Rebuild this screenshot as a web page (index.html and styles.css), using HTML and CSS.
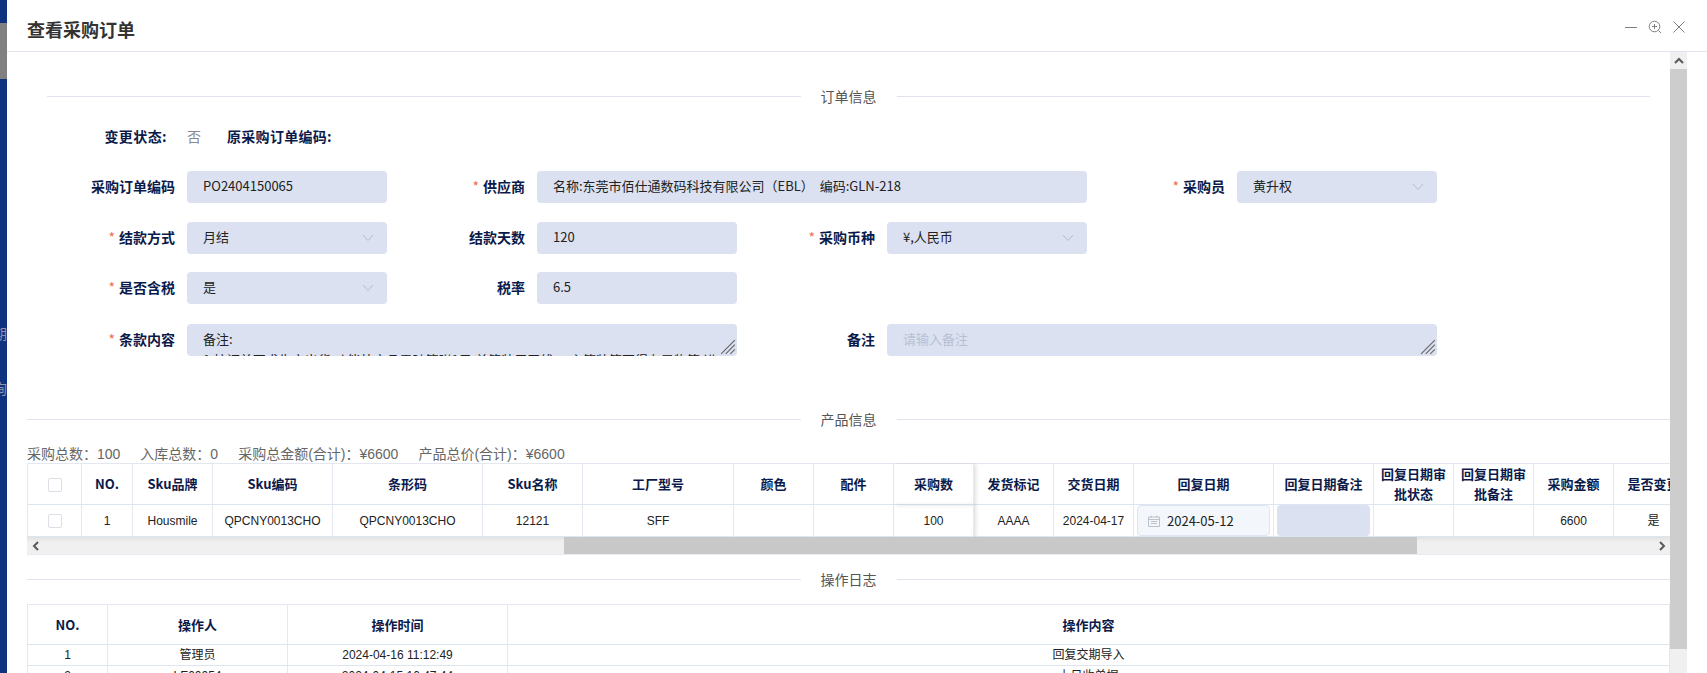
FILE: index.html
```html
<!DOCTYPE html>
<html lang="zh-CN">
<head>
<meta charset="utf-8">
<title>查看采购订单</title>
<link rel="stylesheet" href="styles.css">
</head>
<body>
<div class="page">
  <aside class="rail">
    <div class="rail-active"></div>
    <div class="rail-glyph first">期</div>
    <div class="rail-glyph second">询</div>
  </aside>
  <main class="dialog">
    <header class="dialog-head">
      <h1 class="dialog-title">查看采购订单</h1>
      <div class="win-tools">
        <svg class="win-icon" viewBox="0 0 14 14"><path d="M1 7.5h12"/></svg>
        <svg class="win-icon" viewBox="0 0 14 14"><circle cx="6.5" cy="6.5" r="5.3"/><path d="M6.5 4v5M4 6.5h5M10.5 10.5l2.5 2.5"/></svg>
        <svg class="win-icon" viewBox="0 0 14 14"><path d="M1.5 1.5l11 11M12.5 1.5l-11 11"/></svg>
      </div>
    </header>
    <div class="dialog-body">
      <div class="content">
        <div class="divider inset first"><span class="divider-text">订单信息</span></div>
        <div class="status-row">
          <span class="status-label">变更状态:</span>
          <span class="status-value">否</span>
          <span class="status-origin">原采购订单编码:</span>
        </div>
        <div class="form-grid">
          <div class="label">采购订单编码</div>
          <div class="field">PO2404150065</div>
          <div class="label"><i class="req">*</i>供应商</div>
          <div class="field span3">名称:东莞市佰仕通数码科技有限公司&#xFF08;EBL&#xFF09;&nbsp;&nbsp;编码:GLN-218</div>
          <div class="label"><i class="req">*</i>采购员</div>
          <div class="field select"><span>黄升权</span><svg class="chev" viewBox="0 0 12 8"><path d="M1 1l5 5.5L11 1"/></svg></div>

          <div class="label"><i class="req">*</i>结款方式</div>
          <div class="field select"><span>月结</span><svg class="chev" viewBox="0 0 12 8"><path d="M1 1l5 5.5L11 1"/></svg></div>
          <div class="label">结款天数</div>
          <div class="field">120</div>
          <div class="label"><i class="req">*</i>采购币种</div>
          <div class="field select"><span>¥,人民币</span><svg class="chev" viewBox="0 0 12 8"><path d="M1 1l5 5.5L11 1"/></svg></div>
          <div class="blank"></div>
          <div class="blank"></div>

          <div class="label"><i class="req">*</i>是否含税</div>
          <div class="field select"><span>是</span><svg class="chev" viewBox="0 0 12 8"><path d="M1 1l5 5.5L11 1"/></svg></div>
          <div class="label">税率</div>
          <div class="field">6.5</div>
          <div class="blank"></div>
          <div class="blank"></div>
          <div class="blank"></div>
          <div class="blank"></div>

          <div class="label"><i class="req">*</i>条款内容</div>
          <div class="field span3 area">
            <div class="area-text">备注:<br>1.按订单要求生产出货,功能外产品需随箱附1只,单笔装用天线,一主箱装箱不得有异物等,进</div>
            <svg class="grip" viewBox="0 0 14 14"><path d="M13 1L1 13M13 5L5 13M13 9l-4 4"/></svg>
          </div>
          <div class="label">备注</div>
          <div class="field span3 area">
            <div class="area-text placeholder">请输入备注</div>
            <svg class="grip" viewBox="0 0 14 14"><path d="M13 1L1 13M13 5L5 13M13 9l-4 4"/></svg>
          </div>
        </div>

        <div class="divider second"><span class="divider-text">产品信息</span></div>
        <div class="summary">
          <span>采购总数&#xFF1A;100</span>
          <span>入库总数&#xFF1A;0</span>
          <span>采购总金额(合计)&#xFF1A;¥6600</span>
          <span>产品总价(合计)&#xFF1A;¥6600</span>
        </div>
        <div class="table-clip">
          <table class="grid product">
            <colgroup>
              <col class="w54"><col class="w51"><col class="w80"><col class="w120"><col class="w150"><col class="w100"><col class="w151"><col class="w80"><col class="w80"><col class="w80"><col class="w80"><col class="w80"><col class="w140"><col class="w100"><col class="w80"><col class="w80"><col class="w80"><col class="w80">
            </colgroup>
            <thead>
              <tr>
                <th><span class="check"></span></th>
                <th>NO.</th><th>Sku品牌</th><th>Sku编码</th><th>条形码</th><th>Sku名称</th><th>工厂型号</th><th>颜色</th><th>配件</th><th class="frozen-edge">采购数</th><th>发货标记</th><th>交货日期</th><th>回复日期</th><th>回复日期备注</th><th>回复日期审批状态</th><th>回复日期审批备注</th><th>采购金额</th><th>是否变更</th>
              </tr>
            </thead>
            <tbody>
              <tr>
                <td><span class="check"></span></td>
                <td>1</td><td>Housmile</td><td>QPCNY0013CHO</td><td>QPCNY0013CHO</td><td>12121</td><td>SFF</td><td></td><td></td><td class="frozen-edge">100</td><td>AAAA</td><td>2024-04-17</td>
                <td class="tight"><div class="date-box"><svg class="cal" viewBox="0 0 12 12"><path d="M.5 2h11v9.5H.5zM.5 4.5h11M3 .5v2.5M9 .5v2.5M3 6.5h6M3 8.5h6"/></svg>2024-05-12</div></td>
                <td class="tight"><div class="note-box"></div></td>
                <td></td><td></td><td>6600</td><td>是</td>
              </tr>
            </tbody>
          </table>
        </div>
        <div class="hbar">
          <div class="hbar-btn"><svg class="arrow" viewBox="0 0 8 10"><path d="M6 1L2 5l4 4"/></svg></div>
          <div class="hbar-lead"></div>
          <div class="hbar-thumb"></div>
          <div class="hbar-tail"></div>
          <div class="hbar-btn"><svg class="arrow" viewBox="0 0 8 10"><path d="M2 1l4 4-4 4"/></svg></div>
        </div>

        <div class="divider third"><span class="divider-text">操作日志</span></div>
        <table class="grid log">
          <colgroup><col class="w80"><col class="w180"><col class="w220"><col></colgroup>
          <thead><tr><th>NO.</th><th>操作人</th><th>操作时间</th><th>操作内容</th></tr></thead>
          <tbody>
            <tr><td>1</td><td>管理员</td><td>2024-04-16 11:12:49</td><td>回复交期导入</td></tr>
            <tr><td>2</td><td>LE00054</td><td>2024-04-15 10:47:44</td><td>上日收单据</td></tr>
          </tbody>
        </table>
      </div>
      <div class="vbar">
        <div class="vbar-btn"><svg class="arrow up" viewBox="0 0 10 8"><path d="M1 6l4-4 4 4"/></svg></div>
        <div class="vbar-thumb"></div>
        <div class="vbar-track"></div>
      </div>
    </div>
  </main>
</div>
</body>
</html>
```
FILE: styles.css
```css
* { box-sizing: border-box; }
html, body { margin: 0; padding: 0; height: 100%; background: #fff; }
body { font-family: "Noto Sans CJK SC", "Liberation Sans", sans-serif; overflow: hidden; }
.page { display: flex; width: 1707px; height: 673px; overflow: hidden; }

.rail { width: 7px; flex: none; background: #0f327e; padding-top: 23px; overflow: hidden; }
.rail-active { height: 56px; background: #808080; }
.rail-glyph { font-size: 14px; line-height: 16px; width: 7px; color: #8b95ae; white-space: nowrap; text-indent: -7px; }
.rail-glyph.first { margin-top: 246px; }
.rail-glyph.second { margin-top: 39px; }

.dialog { flex: 1; min-width: 0; display: flex; flex-direction: column; background: #fff; }
.dialog-head { height: 52px; flex: none; display: flex; align-items: center; justify-content: space-between; padding: 0 20px; border-bottom: 1px solid #e1e4ee; }
.dialog-title { margin: 6px 0 0; font-size: 18px; font-weight: 700; color: #333; line-height: 24px; }
.win-tools { display: flex; gap: 10px; margin: 2px 1px 0 0; }
.win-icon { width: 14px; height: 14px; fill: none; stroke: #7f7f7f; stroke-width: 1; }

.dialog-body { flex: 1; min-height: 0; display: flex; padding-right: 20px; }
.content { flex: 1; min-width: 0; overflow: hidden; padding-left: 20px; }

.vbar { width: 17px; flex: none; display: flex; flex-direction: column; }
.vbar-btn { height: 17px; background: #f0f0f0; display: flex; align-items: center; justify-content: center; }
.vbar-thumb { height: 580px; background: #cdcdcd; }
.vbar-track { flex: 1; background: #f0f0f0; }
.arrow { fill: none; stroke: #5a5a5a; stroke-width: 2; }
.arrow.up { width: 10px; height: 8px; }

.divider { display: flex; align-items: center; height: 20px; font-size: 14px; color: #555; }
.divider::before, .divider::after { content: ""; flex: 1; height: 1px; background: #dfe3ec; }
.divider-text { padding: 0 20px; line-height: 20px; }
.divider.inset { margin: 0 20px; }
.divider.first { margin-top: 34px; }
.divider.second { margin-top: 53px; }
.divider.third { margin-top: 14px; }

.status-row { display: flex; align-items: center; height: 20px; margin-top: 20px; font-size: 14px; line-height: 20px; }
.status-label { width: 140px; text-align: right; font-weight: 700; color: #0b1a4a; letter-spacing: 0.4px; }
.status-value { margin-left: 20px; color: #888; }
.status-origin { margin-left: 26px; font-weight: 700; color: #0b1a4a; letter-spacing: 0.3px; }

.form-grid { display: grid; grid-template-columns: 148px 200px 126px 200px 126px 200px 126px 200px; grid-template-rows: 33px 32px 34px 32px; column-gap: 12px; row-gap: 18px; margin-top: 25px; }
.label { height: 32px; line-height: 30px; text-align: right; font-size: 14px; font-weight: 700; color: #0b1a4a; white-space: nowrap; }
.req { font-style: normal; font-weight: 400; color: #f56c4c; margin-right: 4px; }
.field { position: relative; height: 32px; line-height: 30px; padding: 0 16px; background: #dbe1f0; border-radius: 4px; font-size: 13px; color: #222; white-space: nowrap; overflow: hidden; }
.span3 { grid-column: span 3; }
.select { display: flex; justify-content: space-between; align-items: flex-start; padding-right: 13px; }
.chev { width: 12px; height: 8px; align-self: center; fill: none; stroke: #b4bccd; stroke-width: 1; }
.area { padding: 0; }
.area-text { padding: 4px 16px; line-height: 21px; }
.area-text.placeholder { color: #b7bfd2; }
.grip { position: absolute; right: 1px; bottom: 1px; width: 16px; height: 16px; fill: none; stroke: #666; stroke-width: 1; }

.summary { display: flex; gap: 20px; margin-top: 16px; height: 18px; line-height: 18px; font-family: "Liberation Sans", "Noto Sans CJK SC", sans-serif; font-size: 14px; color: #666; }

.table-clip { width: 1643px; overflow: hidden; }
.grid { border-collapse: separate; border-spacing: 0; table-layout: fixed; border-top: 1px solid #e3e7ef; border-left: 1px solid #e3e7ef; }
.grid th, .grid td { padding: 0; text-align: center; border-right: 1px solid #e3e8f1; border-bottom: 1px solid #dde5f1; overflow: hidden; }
.grid th { padding: 0 6px; font-size: 13px; font-weight: 700; line-height: 20px; color: #0b1a4a; }
.grid td { font-family: "Liberation Sans", "Noto Sans CJK SC", sans-serif; font-size: 12px; color: #222; line-height: 16px; }
.product { width: 1667px; }
.product thead tr { height: 41px; }
.product tbody tr { height: 32px; }
.frozen-edge { position: relative; z-index: 1; box-shadow: 2px 0 4px rgba(0, 0, 0, 0.12); }
.log { width: 1643px; margin-top: 15px; }
.log thead tr { height: 40px; }
.log tbody tr { height: 21px; }

.w51 { width: 51px; } .w54 { width: 54px; } .w80 { width: 80px; } .w100 { width: 100px; } .w120 { width: 120px; } .w140 { width: 140px; } .w150 { width: 150px; } .w151 { width: 151px; } .w180 { width: 180px; } .w220 { width: 220px; }

.check { display: inline-block; width: 14px; height: 14px; vertical-align: middle; border: 1px solid #dcdfe6; border-radius: 2px; background: #fff; }
.grid td.tight { padding: 0 3px; }
.date-box { display: flex; align-items: center; height: 31px; padding-left: 10px; gap: 7px; background: #f3f6fb; border: 1px solid #dfe6f2; border-radius: 4px; font-family: "Noto Sans CJK SC", sans-serif; font-size: 13px; color: #222; }
.cal { width: 12px; height: 12px; fill: none; stroke: #bcc2cc; stroke-width: 1; flex: none; }
.note-box { height: 31px; background: #dbe1f0; border-radius: 4px; }

.hbar { display: flex; width: 1643px; height: 18px; background: #f0f0f0; border-bottom: 1px solid #e6eaf1; box-shadow: inset 0 6px 6px -6px rgba(0, 0, 0, 0.12); }
.hbar-btn { width: 17px; flex: none; display: flex; align-items: center; justify-content: center; }
.hbar-btn .arrow { width: 8px; height: 10px; }
.hbar-lead { width: 520px; flex: none; }
.hbar-thumb { width: 853px; flex: none; background: #c8c8c8; }
.hbar-tail { flex: 1; }
```
